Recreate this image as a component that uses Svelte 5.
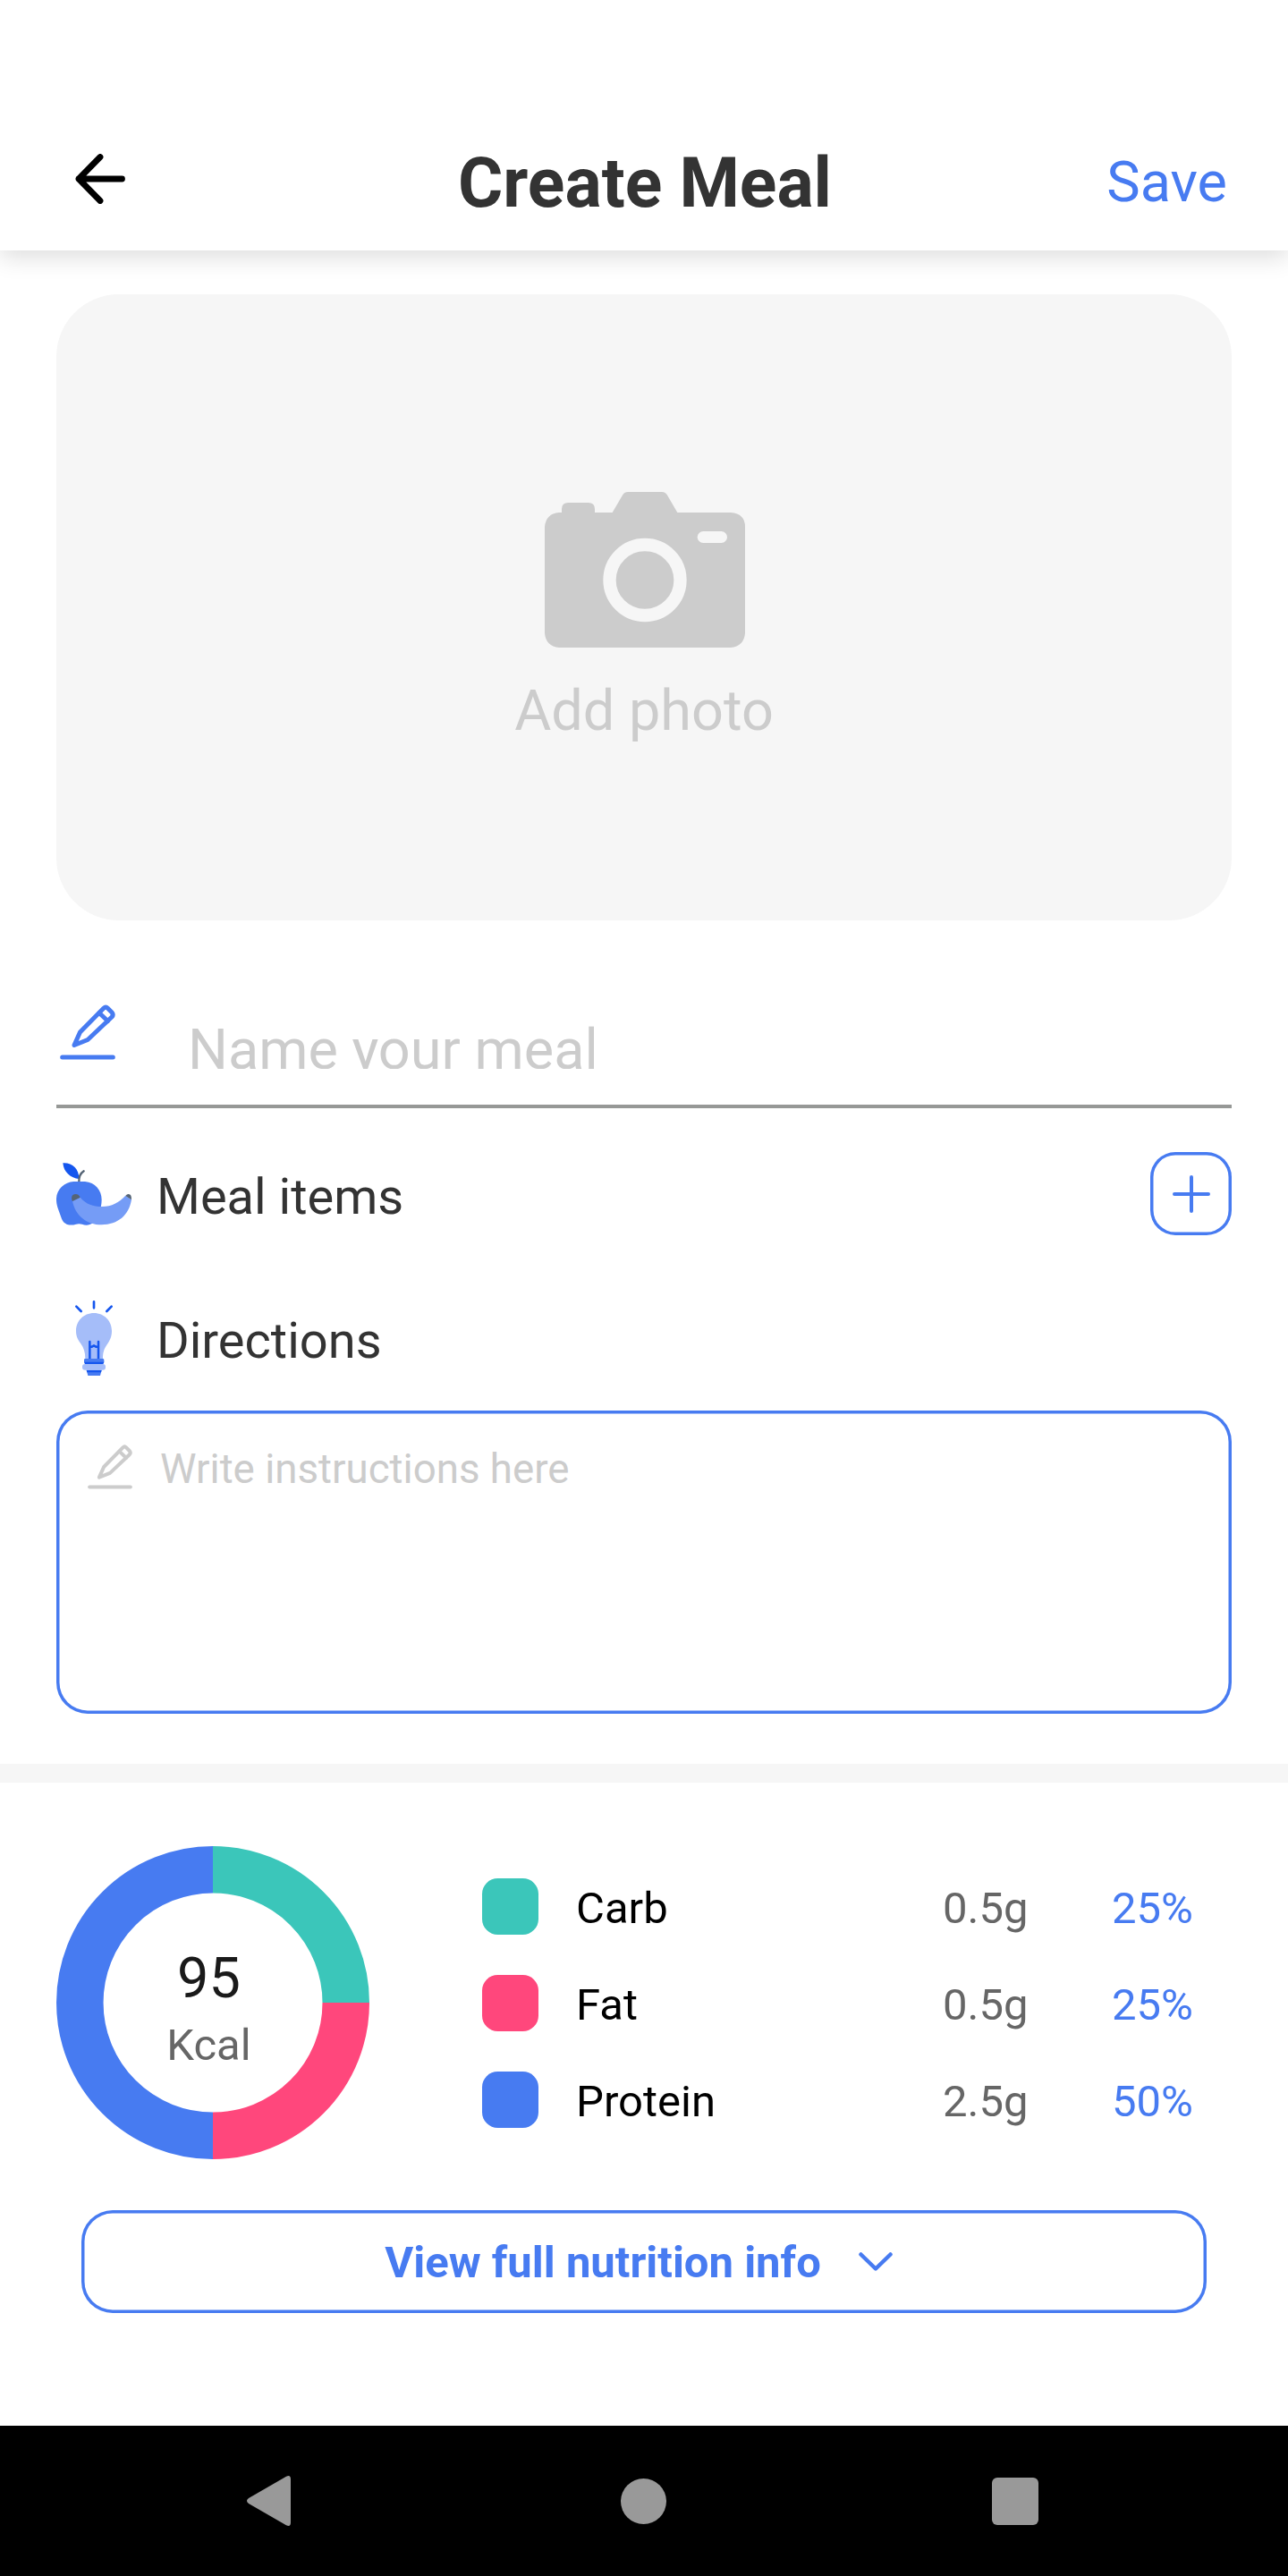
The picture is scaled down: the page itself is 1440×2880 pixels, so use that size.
<script>
  const macros = [
    { name: 'Carb', grams: '0.5g', percent: '25%', tone: 'teal' },
    { name: 'Fat', grams: '0.5g', percent: '25%', tone: 'pink' },
    { name: 'Protein', grams: '2.5g', percent: '50%', tone: 'blue' },
  ];
</script>

{#snippet pencil()}
  <svg class="pencil" viewBox="0 0 62 62" fill="none" stroke="currentColor" stroke-width="5" stroke-linecap="round" stroke-linejoin="round">
    <path d="M2.700 59H59.300" />
    <path d="M16 45.500L22.500 31L48.800 4.200Q51.200 1.900 53.500 4.200L58.200 9Q60.200 11.500 58 14L31 39.500Z" />
    <path d="M44 9.500L53.500 18.500" />
  </svg>
{/snippet}

<div class="screen">
  <header>
    <svg class="back" viewBox="0 0 56 56" fill="none" stroke="#000" stroke-width="6.8" stroke-linecap="round" stroke-linejoin="round">
      <path d="M52.500 28H4M28 3.500L4 28L28 52.500" />
    </svg>
    <h1>Create Meal</h1>
    <span class="save">Save</span>
  </header>

  <main>
    <section class="photo">
      <svg class="camera" viewBox="207 90 672 522">
        <path fill="#ccc" d="M255 159H264V148Q264 126 286 126H353Q375 126 375 148V159H434L469 99Q475 90 486 90H600Q611 90 617 99L652 159H831Q879 163 879 207V564Q875 608 831 612H255Q211 608 207 564V207Q211 163 255 159Z" />
        <circle cx="543" cy="385.500" r="118.500" fill="#ccc" stroke="#f6f6f6" stroke-width="43" />
        <rect x="719" y="222" width="100" height="39" rx="19.500" fill="#f6f6f6" />
      </svg>
      <span>Add photo</span>
    </section>

    <section class="name">
      {@render pencil()}
      <span class="placeholder">Name your meal</span>
    </section>

    <section class="row items">
      <svg class="icon" viewBox="69 69 252 252">
        <path fill="#1556ee" d="M91 91C122 89 145 110 145 144C117 142 93 121 91 91Z" />
        <path fill="none" stroke="#556475" stroke-width="7" stroke-linecap="round" d="M145 155C144 140 149 126 161 118" />
        <path fill="#477bf1" d="M127 153H165C199 155 221 182 221 214C221 245 208 270 200 283C188 300 171 302 155 296Q145 293 135 296C113 303 94 296 87 278L74 242C70 230 69 222 69 211C70 178 97 155 127 153Z" />
        <path fill="#759cf6" d="M123 218L149 206C169 229 192 237 222 237C255 237 279 223 301 200L321 214C313 265 276 298 221 298C170 298 132 266 123 218Z" />
        <path fill="#556475" d="M123 219C117 207 121 195 133 195C141 195 145 198 149 206ZM301 201Q308 191 317 197Q321 200 321 214Z" />
      </svg>
      <span>Meal items</span>
      <button class="add" aria-label="Add meal item">
        <svg viewBox="0 0 42 42" fill="none" stroke="currentColor" stroke-width="4" stroke-linecap="round">
          <path d="M2 21H40M21 2V40" />
        </svg>
      </button>
    </section>

    <section class="row directions">
      <svg class="icon" viewBox="69 552 252 252">
        <path fill="none" stroke="#1556ee" stroke-width="8" stroke-linecap="round" d="M195 556V577M136 572L152 588M254 572L238 588" />
        <path fill="#a5bdf9" d="M195 594C230 594 255 621 255 654C255 674 248 687 239 700C228 717 225 726 225 748H166C166 726 161 710 151 697C141 683 135 672 135 654C135 621 160 594 195 594Z" />
        <path fill="none" stroke="#1556ee" stroke-width="7.500" stroke-linecap="round" d="M181 690V750M210 690V750M181 707H188L195 703L202 707H210" />
        <path fill="#477bf1" d="M162 751Q162 747 166 747H224Q229 747 229 751V760H162ZM170 785H221L216 804H175Z" />
        <path fill="#1556ee" d="M162 758H229L226 766H165ZM170 785H221L219 793H172Z" />
        <rect x="156" y="765" width="78" height="20" rx="9" fill="#a5bdf9" />
      </svg>
      <span>Directions</span>
    </section>

    <section class="instructions">
      {@render pencil()}
      <span>Write instructions here</span>
    </section>
  </main>

  <div class="divider"></div>

  <section class="nutrition">
    <div class="donut">
      <svg viewBox="0 0 350 350" fill="none" stroke-width="52.500">
        <path stroke="#3bc6ba" d="M175 26.250A148.750 148.750 0 0 1 323.750 175" />
        <path stroke="#ff477c" d="M323.750 175A148.750 148.750 0 0 1 175 323.750" />
        <path stroke="#477bf1" d="M175 323.750A148.750 148.750 0 0 1 175 26.250" />
      </svg>
      <div class="total">
        <span class="kcal">95</span>
        <span class="unit">Kcal</span>
      </div>
    </div>
    <ul>
      {#each macros as m}
        <li>
          <i class={m.tone}></i>
          <span>{m.name}</span>
          <span class="grams">{m.grams}</span>
          <span class="percent">{m.percent}</span>
        </li>
      {/each}
    </ul>
  </section>

  <button class="more">
    <span>View full nutrition info</span>
    <svg viewBox="0 0 38 22" fill="none" stroke="currentColor" stroke-width="4.500" stroke-linecap="round" stroke-linejoin="round">
      <path d="M2.500 2.500L19 18.500L35.500 2.500" />
    </svg>
  </button>

  <nav>
    <svg class="nav-back" viewBox="0 0 49 56"><path d="M44 .8Q49 -1.500 49 4V52Q49 57.500 44 55.200L2 31Q-2 28 2 25Z" /></svg>
    <i class="home"></i>
    <i class="recent"></i>
  </nav>
</div>

<style>
  :global(body) {
    background: #fff;
  }
  .screen {
    width: 1440px;
    height: 2880px;
    display: flex;
    flex-direction: column;
    overflow: hidden;
    background: #fff;
    color: #333;
    font-family: Roboto, sans-serif;
    box-sizing: border-box;
  }
  .screen :is(header, section, button, nav, ul, main) {
    box-sizing: border-box;
  }
  svg {
    display: block;
    flex: none;
  }
  button {
    padding: 0;
    background: none;
    border: 0;
    box-shadow: inset 0 0 0 3.5px #477bf1;
    color: #477bf1;
    font: inherit;
  }
  header {
    height: 280px;
    flex: none;
    padding: 130px 68px 0 84px;
    display: grid;
    grid-template-columns: 200px 1fr 214px;
    align-items: center;
    box-shadow: 0 7px 26px rgba(0, 0, 0, 0.14);
    clip-path: inset(0 0 -60px 0);
  }
  .back {
    width: 56px;
    height: 56px;
    margin-bottom: 10px;
  }
  h1 {
    margin: 0;
    font-size: 77px;
    line-height: 90px;
    font-weight: 700;
    text-align: center;
  }
  .save {
    text-align: right;
    font-size: 63px;
    line-height: 74px;
    color: #477bf1;
    margin-bottom: 3px;
  }
  main {
    padding: 49px 63px 0;
    height: 1692px;
    flex: none;
  }
  .photo {
    height: 700px;
    padding-top: 221px;
    border-radius: 70px;
    background: #f6f6f6;
    display: flex;
    flex-direction: column;
    align-items: center;
    gap: 34px;
    color: #ccc;
    font-size: 63px;
    line-height: 74px;
  }
  .camera {
    width: 224px;
    height: 174px;
    margin-left: 2px;
  }
  .name {
    height: 210px;
    padding: 94px 0 0 4px;
    display: flex;
    align-items: flex-start;
    gap: 81px;
    border-bottom: 4px solid #969896;
    color: #477bf1;
  }
  .name .pencil {
    width: 62px;
    height: 62px;
  }
  .placeholder {
    margin-top: 14px;
    height: 58px;
    overflow: hidden;
    font-size: 63px;
    line-height: 73px;
    color: #ccc;
  }
  .row {
    display: flex;
    align-items: center;
    gap: 28px;
    font-size: 56px;
    line-height: 66px;
  }
  .row span {
    padding-top: 6px;
  }
  .items {
    height: 93px;
    margin-top: 49px;
  }
  .directions {
    height: 84px;
    margin-top: 73px;
  }
  .icon {
    width: 84px;
    height: 84px;
  }
  .add {
    width: 91px;
    height: 93px;
    margin-left: auto;
    border-radius: 28px;
    display: flex;
    align-items: center;
    justify-content: center;
  }
  .add svg {
    width: 42px;
    height: 42px;
  }
  .instructions {
    height: 339px;
    margin-top: 39px;
    box-shadow: inset 0 0 0 3.5px #477bf1;
    border-radius: 35px;
    padding: 38px 35px;
    display: flex;
    align-items: flex-start;
    gap: 31px;
    color: #ccc;
    font-size: 45.7px;
    line-height: 56px;
  }
  .instructions .pencil {
    width: 50px;
    height: 50px;
  }
  .divider {
    height: 21px;
    flex: none;
    background: #f6f6f6;
  }
  .nutrition {
    height: 421px;
    margin-top: 71px;
    flex: none;
    padding-left: 63px;
    display: flex;
    align-items: flex-start;
    gap: 126px;
  }
  .donut {
    display: grid;
    width: 350px;
    height: 350px;
  }
  .donut > * {
    grid-area: 1 / 1;
  }
  .total {
    padding: 111px 9px 0 0;
    display: flex;
    flex-direction: column;
    align-items: center;
  }
  .kcal {
    font-size: 63px;
    line-height: 74px;
    color: #1a1a1a;
  }
  .unit {
    font-size: 49px;
    line-height: 76px;
    color: #666;
  }
  ul {
    list-style: none;
    margin: 36px 0 0;
    padding: 0;
    display: grid;
    gap: 45px;
  }
  li {
    height: 63px;
    display: grid;
    grid-template-columns: 63px 368px 95px 90px;
    column-gap: 42px;
    align-items: center;
    font-size: 49px;
    line-height: 58px;
    color: #000;
  }
  li i {
    height: 63px;
    border-radius: 17.5px;
  }
  li span {
    padding-top: 5px;
  }
  .teal {
    background: #3bc6ba;
  }
  .pink {
    background: #ff477c;
  }
  .blue {
    background: #477bf1;
  }
  .grams {
    color: #666;
  }
  .percent {
    margin-left: 52px;
    color: #477bf1;
  }
  .more {
    width: 1258px;
    height: 115px;
    flex: none;
    margin: -14px auto 0;
    padding: 3px 12px 0 0;
    border-radius: 35px;
    display: flex;
    align-items: center;
    justify-content: center;
    gap: 42px;
    font-size: 49px;
    line-height: 58px;
    font-weight: 700;
  }
  .more svg {
    width: 38px;
    height: 22px;
    margin-bottom: 3px;
  }
  nav {
    height: 168px;
    flex: none;
    margin-top: auto;
    padding: 0 279px 0 276px;
    background: #000;
    display: flex;
    align-items: center;
    justify-content: space-between;
  }
  nav svg {
    width: 49px;
    height: 56px;
    fill: #999;
  }
  nav i {
    background: #999;
  }
  .home {
    width: 51px;
    height: 51px;
    margin-left: 5px;
    border-radius: 50%;
  }
  .recent {
    width: 52px;
    height: 53px;
    border-radius: 6px;
  }
</style>
